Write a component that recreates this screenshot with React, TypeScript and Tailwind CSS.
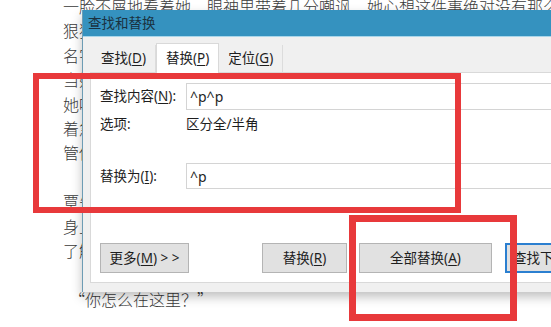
const docLines = [
  '一脸不屑地看着她，眼神里带着几分嘲讽，她心想这件事绝对没有那么简单，于是',
  '狠狠',
  '名字',
  '当她',
  '她咬',
  '着急',
  '管他',
  '',
  '覃先',
  '身上',
  '了解',
  '',
]

function U({ children }: { children: string }) {
  return <span className="underline underline-offset-2">{children}</span>
}

function Tab({ label, k, active }: { label: string; k: string; active?: boolean }) {
  return (
    <div
      className={
        active
          ? 'relative -mb-px flex h-[30px] items-center border border-b-0 border-[#d9d9d9] bg-white px-[9px]'
          : 'flex h-[27px] items-center border-r border-[#dcdcdc] px-[9px]'
      }
    >
      {label}(<U>{k}</U>)
    </div>
  )
}

function Btn({ w, children, blue }: { w: string; children: React.ReactNode; blue?: boolean }) {
  return (
    <div
      className={`flex h-[30px] shrink-0 items-center justify-center border bg-[#e1e1e1] ${w} ${
        blue ? 'border-2 border-[#2b7fd0]' : 'border-[#b4b4b4]'
      }`}
    >
      {children}
    </div>
  )
}

export default function App() {
  return (
    <div className="relative h-[327px] w-[551px] overflow-hidden bg-white">
      {/* document behind the dialog */}
      <div className="mt-[-6px] pl-[63px] font-['Noto_Sans_CJK_SC',sans-serif] text-[16px] font-light leading-[24.4px] text-[#3a3a3a]">
        {docLines.map((t, i) => (
          <div key={i} className="h-[24.4px] whitespace-nowrap">
            {t}
          </div>
        ))}
        <div className="h-[24.4px] whitespace-nowrap pl-[6px]">“你怎么在这里？”</div>
      </div>

      {/* dialog */}
      <div className="absolute left-[82px] top-[10px] flex w-[490px] flex-col border-l border-[#6d9cb4] bg-[#f0f0f0] font-['Noto_Sans','Noto_Sans_CJK_SC',sans-serif] text-[13.5px] text-[#1e1e1e] shadow-[0_5px_10px_rgba(0,0,0,0.25)]">
        <div className="flex h-[26px] items-center bg-[#3592bf] pl-[5px] text-[13.5px] text-[#1a3140]">
          查找和替换
        </div>
        <div className="h-px bg-[#a9d6ea]" />
        <div className="flex h-[35px] items-end pl-[9px]">
          <Tab label="查找" k="D" />
          <Tab label="替换" k="P" active />
          <Tab label="定位" k="G" />
        </div>
        <div className="ml-[7px] flex flex-col border border-[#d9d9d9] bg-white pb-[9px] pl-[9px] pt-[10px]">
          <div className="flex h-[27px] items-center">
            <div className="w-[86px]">
              查找内容(<U>N</U>):
            </div>
            <div className="flex h-[27px] flex-1 items-center border border-[#d4d4d4] pl-[3px] text-[14px]">
              ^p^p
            </div>
          </div>
          <div className="mt-[5px] flex h-[18px] items-center">
            <div className="w-[86px]">选项:</div>
            <div>区分全/半角</div>
          </div>
          <div className="mt-[30px] flex h-[26px] items-center">
            <div className="w-[86px]">
              替换为(<U>I</U>):
            </div>
            <div className="flex h-[26px] flex-1 items-center border border-[#d4d4d4] pl-[3px] text-[14px]">
              ^p
            </div>
          </div>
          <div className="mt-[54px] flex">
            <Btn w="w-[89px]">
              更多(<U>M</U>) &gt; &gt;
            </Btn>
            <div className="w-[73px] shrink-0" />
            <Btn w="w-[85px]">
              替换(<U>R</U>)
            </Btn>
            <div className="w-[12px] shrink-0" />
            <Btn w="w-[133px]">
              全部替换(<U>A</U>)
            </Btn>
            <div className="w-[13px] shrink-0" />
            <Btn w="w-[110px]" blue>
              <span className="w-full pl-[6px]">查找下一处(<U>F</U>)</span>
            </Btn>
          </div>
        </div>
        <div className="h-[9px]" />
      </div>

      {/* red highlight boxes */}
      <div className="absolute left-[33px] top-[73px] h-[140px] w-[428px] border-[6px] border-[#e8393b]" />
      <div className="absolute left-[349px] top-[215px] h-[106px] w-[168px] border-[7px] border-[#e8393b]" />
    </div>
  )
}
